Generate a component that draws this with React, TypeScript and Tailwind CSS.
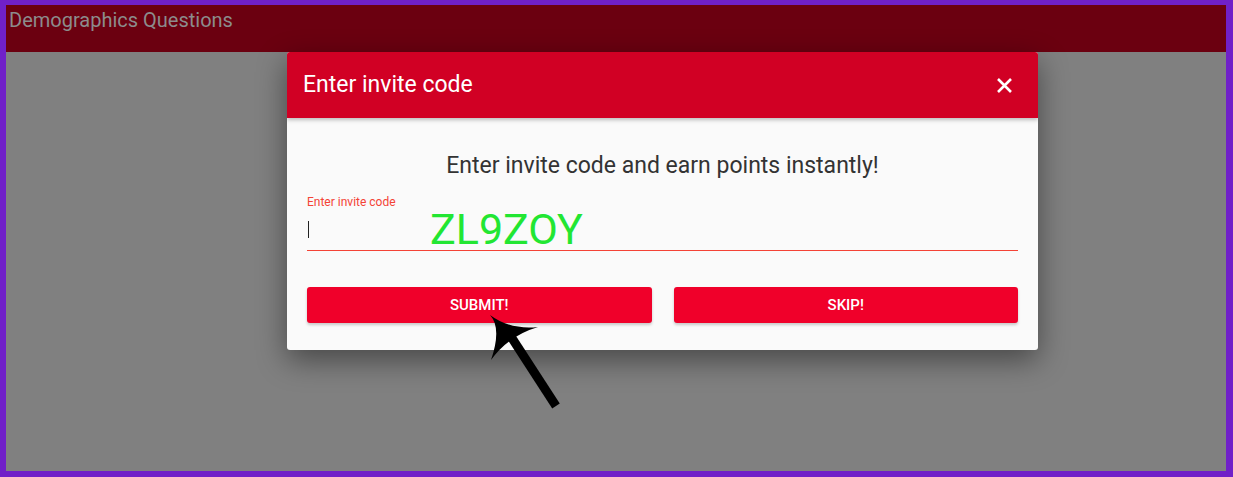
import React from 'react';

const Arrow: React.FC = () => (
  <svg width="90" height="110" viewBox="0 0 90 110" className="absolute left-[480px] top-[308px]">
    <line x1="28" y1="24" x2="76" y2="98" stroke="#000" strokeWidth="9" />
    <path d="M10 7 Q22 20 11 52 Q28 28 58 19 Q30 22 10 7 Z" fill="#000" />
  </svg>
);

const App: React.FC = () => {
  return (
    <div
      className="h-[477px] w-[1233px] bg-[#7020c8] pt-[5px] pl-[6px] pr-[7px] pb-[6px]"
      style={{ fontFamily: 'Roboto, "Liberation Sans", sans-serif' }}
    >
      <div className="relative flex h-full flex-col overflow-hidden">
        <div className="h-[47px] shrink-0 bg-[#6b0010] pl-[3px] text-[20px] leading-[30px] text-[#8c8c8c]">
          Demographics Questions
        </div>
        <div className="flex-1 bg-[#808080]" />

        {/* modal */}
        <div className="absolute left-[281px] top-[47px] w-[751px] overflow-hidden rounded-[3px] bg-[#fafafa] shadow-[0_10px_30px_rgba(0,0,0,0.45)]">
          <div className="flex h-[66px] items-center justify-between bg-[#d10024] pl-[16px] pr-[26px] shadow-[0_2px_4px_rgba(0,0,0,0.25)]">
            <span className="text-[23px] text-white">Enter invite code</span>
            <svg width="15" height="15" viewBox="0 0 15 15">
              <path d="M1 1 L14 14 M14 1 L1 14" stroke="#fff" strokeWidth="2.6" />
            </svg>
          </div>
          <div className="px-[20px] pb-[27px]">
            <p className="pt-[34px] text-center text-[23px] leading-[28px] text-[#333]">
              Enter invite code and earn points instantly!
            </p>
            <div className="mt-[15px]">
              <div className="text-[12px] leading-[14px] text-[#f44336]">Enter invite code</div>
              <div className="flex h-[42px] items-center border-b border-[#f44336]">
                <span className="ml-[1px] h-[17px] w-[1px] bg-[#222]" />
                <span className="ml-[121px] text-[43px] leading-none text-[#22e632]">ZL9ZOY</span>
              </div>
            </div>
            <div className="mt-[36px] flex gap-[22px]">
              <button className="h-[36px] flex-1 rounded-[3px] bg-[#f0002a] text-[15px] font-medium text-white shadow-[0_2px_3px_rgba(0,0,0,0.2)]">
                SUBMIT!
              </button>
              <button className="h-[36px] flex-1 rounded-[3px] bg-[#f0002a] text-[15px] font-medium text-white shadow-[0_2px_3px_rgba(0,0,0,0.2)]">
                SKIP!
              </button>
            </div>
          </div>
        </div>
      </div>
      <Arrow />
    </div>
  );
};

export default App;
